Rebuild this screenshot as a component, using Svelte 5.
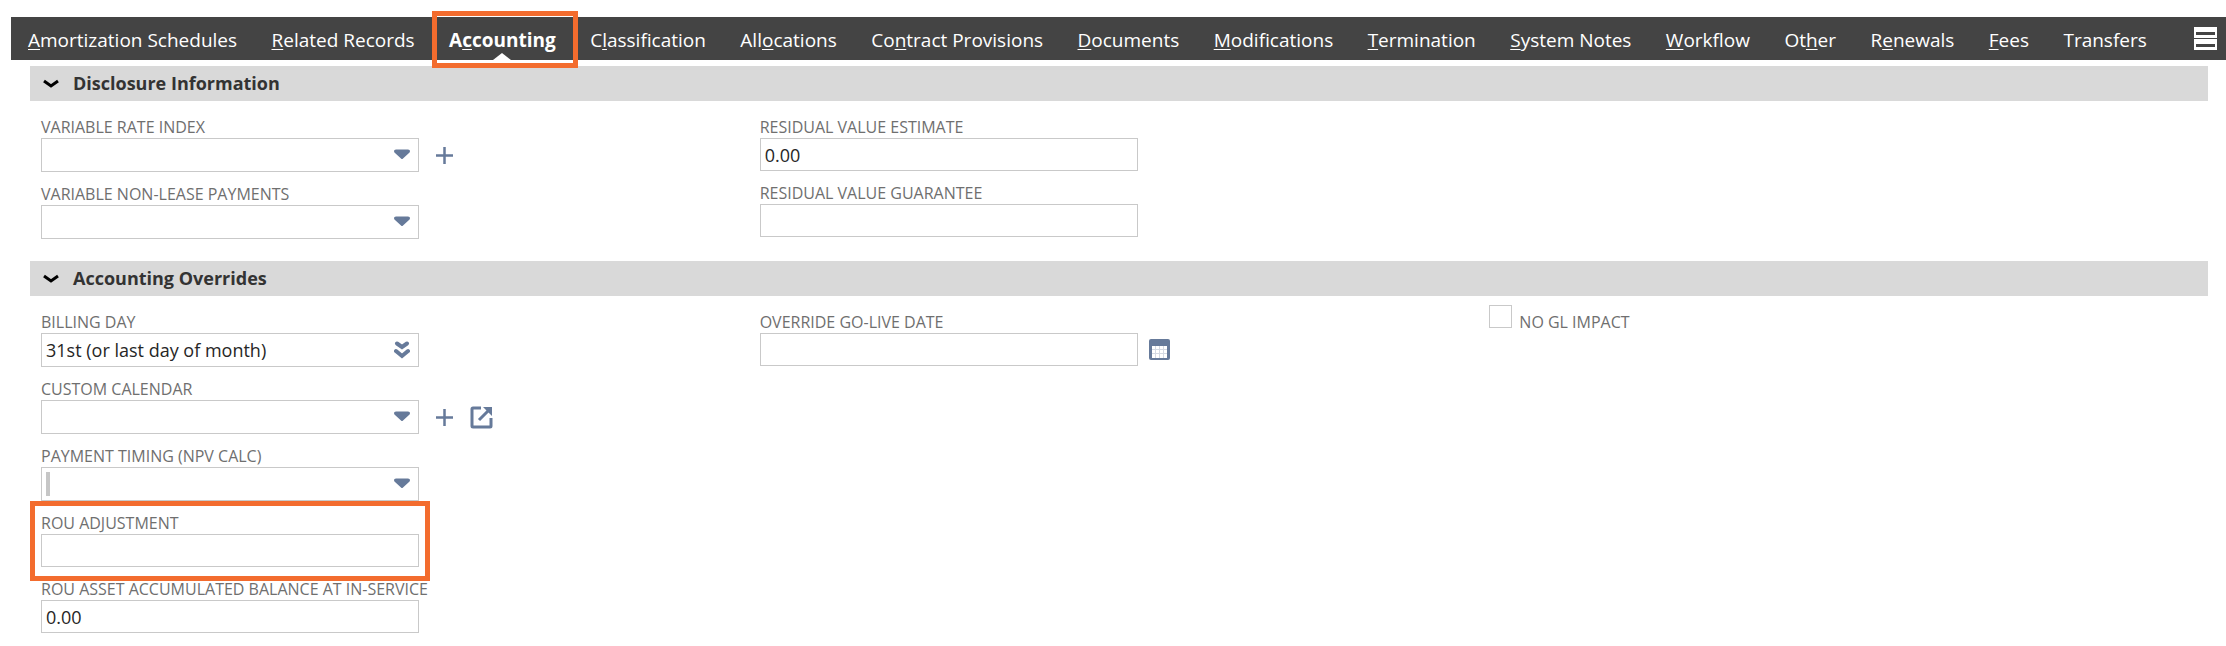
<script>
	const tabs = [
		{ text: 'Amortization Schedules', key: 0 },
		{ text: 'Related Records', key: 0 },
		{ text: 'Accounting', key: 1 },
		{ text: 'Classification', key: 1 },
		{ text: 'Allocations', key: 3 },
		{ text: 'Contract Provisions', key: 2 },
		{ text: 'Documents', key: 0 },
		{ text: 'Modifications', key: 0 },
		{ text: 'Termination', key: 0 },
		{ text: 'System Notes', key: 0 },
		{ text: 'Workflow', key: 0 },
		{ text: 'Other', key: 2 },
		{ text: 'Renewals', key: 1 },
		{ text: 'Fees', key: 0 },
		{ text: 'Transfers', key: -1 }
	];

	let active = $state('Accounting');
	let open = $state({ disclosure: true, overrides: true });

	const disclosureLeft = [
		{ id: 'rate-index', label: 'Variable Rate Index', type: 'select', options: [''], add: true },
		{ id: 'non-lease', label: 'Variable Non-Lease Payments', type: 'select', options: [''] }
	];
	const disclosureRight = [
		{ id: 'residual-estimate', label: 'Residual Value Estimate', type: 'text', value: '0.00' },
		{ id: 'residual-guarantee', label: 'Residual Value Guarantee', type: 'text', value: '' }
	];
	const overridesLeft = [
		{ id: 'billing-day', label: 'Billing Day', type: 'select', options: ['31st (or last day of month)'], double: true },
		{ id: 'calendar', label: 'Custom Calendar', type: 'select', options: [''], add: true, link: true },
		{ id: 'timing', label: 'Payment Timing (NPV Calc)', type: 'select', options: [''], marker: true },
		{ id: 'rou-adjustment', label: 'ROU Adjustment', type: 'text', value: '', highlight: true },
		{ id: 'rou-balance', label: 'ROU Asset Accumulated Balance at In-Service', type: 'text', value: '0.00' }
	];
	const overridesRight = [
		{ id: 'go-live', label: 'Override Go-Live Date', type: 'text', value: '', date: true }
	];
</script>

{#snippet header(name, title)}
	<h2 class="section-title">
		<button type="button" aria-expanded={open[name]} onclick={() => (open[name] = !open[name])}>
			<svg class="chevron" viewBox="0 0 16 10" aria-hidden="true">
				<path d="M1 2l7 5 7-5" />
			</svg>
			{title}
		</button>
	</h2>
{/snippet}

{#snippet field(f)}
	<div class="field" class:highlight={f.highlight}>
		<label for={f.id}>{f.label}</label>
		<div class="control">
			{#if f.type === 'select'}
				<div class="select">
					<select id={f.id}>
						{#each f.options as option}
							<option>{option}</option>
						{/each}
					</select>
					{#if f.marker}
						<span class="marker"></span>
					{/if}
					<svg class="arrow" viewBox="0 0 16 18" aria-hidden="true">
						{#if f.double}
							<path class="line" d="M3 2.5l5 3.5 5-3.5M2 10l6 5 6-5" />
						{:else}
							<path class="fill" d="M2 3.5h12q2 0 2 1.500t-1 2l-6 5.500q-1 1-2 0l-6-5.500q-1-.5-1-2t2-1.500z" />
						{/if}
					</svg>
				</div>
			{:else}
				<input id={f.id} type="text" value={f.value} />
			{/if}
			{#if f.add}
				<button type="button" class="icon plus" aria-label="New">
					<svg viewBox="0 0 17 17"><path d="M8.5 0v17M0 8.5h17" /></svg>
				</button>
			{/if}
			{#if f.link}
				<button type="button" class="icon open" aria-label="Open">
					<svg viewBox="0 0 23 23">
						<path d="M11 2H3q-1 0-1 1v17q0 1 1 1h17q1 0 1-1v-8M9 14l9-9" />
						<path class="head" d="M13 1h9v9z" />
					</svg>
				</button>
			{/if}
			{#if f.date}
				<button type="button" class="icon date" aria-label="Pick">
					<svg viewBox="0 0 21 21">
						<rect class="frame" width="21" height="21" rx="2" />
						<rect class="page" x="3" y="7" width="15" height="12" />
						<path class="grid" d="M6.5 7v12M10.5 7v12M14.5 7v12M3 10.5h15M3 14.5h15" />
					</svg>
				</button>
			{/if}
		</div>
	</div>
{/snippet}

<div class="record">
	<nav class="tabs">
		<div class="tab-list">
			{#each tabs as { text, key }}
				<a
					href="#{text.toLowerCase().replace(' ', '-')}"
					class:active={active === text}
					onclick={() => (active = text)}
				>{#if key < 0}{text}{:else}{text.slice(0, key)}<u>{text[key]}</u>{text.slice(key + 1)}{/if}</a>
			{/each}
		</div>
		<button type="button" class="layout" aria-label="Layout">
			<svg viewBox="0 0 23 23">
				<path d="M0 0h23v11H0zM2 5v3h19V5z" fill-rule="evenodd" />
				<path d="M0 12h23v11H0zM2 17v3h19v-3z" fill-rule="evenodd" />
			</svg>
		</button>
	</nav>

	<main>
		<section>
			{@render header('disclosure', 'Disclosure Information')}
			{#if open.disclosure}
				<div class="columns">
					<div class="column">{#each disclosureLeft as f}{@render field(f)}{/each}</div>
					<div class="column">{#each disclosureRight as f}{@render field(f)}{/each}</div>
				</div>
			{/if}
		</section>

		<section>
			{@render header('overrides', 'Accounting Overrides')}
			{#if open.overrides}
				<div class="columns">
					<div class="column">{#each overridesLeft as f}{@render field(f)}{/each}</div>
					<div class="column">{#each overridesRight as f}{@render field(f)}{/each}</div>
					<div class="column">
						<div class="check">
							<input id="no-gl" type="checkbox" />
							<label for="no-gl">No GL Impact</label>
						</div>
					</div>
				</div>
			{/if}
		</section>
	</main>
</div>

<style>
	:global(body) {
		background: #fff;
	}

	.record {
		--accent: #f36c2e;
		--icon: #667a9a;
		--border: #c9c9c9;
		padding: 17px 0 0 11px;
		font-family: 'Open Sans', 'Noto Sans', sans-serif;
		font-size: 18px;
		color: #262626;
	}

	.tabs {
		display: flex;
		align-items: center;
		justify-content: space-between;
		height: 43px;
		padding: 0 9px 0 17px;
		background: #444;
	}

	.tab-list {
		flex: 1;
		display: flex;
		justify-content: space-between;
		margin-right: 47px;
	}

	.tabs a {
		position: relative;
		padding-top: 3px;
		font-size: 19px;
		line-height: 40px;
		color: #fff;
		text-decoration: none;
		white-space: nowrap;
	}

	.tabs u {
		text-underline-offset: 2px;
		text-decoration-thickness: 1px;
		text-decoration-skip-ink: none;
	}

	.tabs a.active {
		font-weight: 700;
	}

	.tabs a.active::before {
		content: '';
		position: absolute;
		bottom: 0;
		left: 50%;
		margin-left: -9px;
		border: 9px solid transparent;
		border-top: 0;
		border-bottom: 7px solid #fff;
	}

	.tabs a.active::after {
		content: '';
		position: absolute;
		inset: -6px -22px -8px -17px;
		border: 5px solid var(--accent);
	}

	button {
		padding: 0;
		border: 0;
		background: none;
		font: inherit;
		color: inherit;
		cursor: pointer;
	}

	svg {
		display: block;
	}

	.layout svg {
		width: 23px;
		height: 23px;
		fill: #fff;
	}

	main {
		padding: 6px 18px 0 19px;
	}

	.section-title {
		margin: 0;
		background: #d9d9d9;
		font-size: 18px;
		font-weight: 700;
		line-height: 35px;
		color: #333;
	}

	.section-title button {
		display: flex;
		align-items: center;
		gap: 14px;
		width: 100%;
		padding-left: 13px;
	}

	.chevron {
		width: 16px;
		height: 10px;
		fill: none;
		stroke: #000;
		stroke-width: 3;
	}

	.columns {
		display: grid;
		grid-template-columns: repeat(3, 1fr);
		padding: 15px 11px 22px;
	}

	.column {
		display: flex;
		flex-direction: column;
		gap: 11px;
	}

	.field {
		position: relative;
	}

	label {
		font-size: 16px;
		line-height: 22px;
		color: #6f6f6f;
		text-transform: uppercase;
		white-space: nowrap;
	}

	.field label {
		display: block;
	}

	.highlight::after {
		content: '';
		position: absolute;
		top: -11px;
		left: -11px;
		width: 390px;
		height: 70px;
		border: 5px solid var(--accent);
		pointer-events: none;
	}

	.control {
		display: flex;
		align-items: center;
	}

	.select {
		position: relative;
	}

	select,
	input[type='text'] {
		display: block;
		box-sizing: border-box;
		width: 378px;
		height: 34px;
		margin: 0;
		padding: 0 4px;
		border: 1px solid var(--border);
		border-radius: 0;
		background: #fff;
		font: inherit;
		color: inherit;
		appearance: none;
	}

	input[type='text'] {
		height: 33px;
	}

	.arrow {
		position: absolute;
		top: 8px;
		right: 9px;
		width: 16px;
		height: 18px;
		pointer-events: none;
	}

	.fill {
		fill: var(--icon);
	}

	.line {
		fill: none;
		stroke: var(--icon);
		stroke-width: 4;
		stroke-linecap: round;
	}

	.marker {
		position: absolute;
		top: 5px;
		left: 5px;
		width: 4px;
		height: 24px;
		background: #c6c6c6;
	}

	.icon svg {
		fill: none;
		stroke: var(--icon);
		stroke-width: 3;
	}

	.plus {
		margin-left: 17px;
	}

	.plus svg {
		width: 17px;
		height: 17px;
		stroke-width: 2.5;
	}

	.open {
		margin-left: 17px;
	}

	.open svg {
		width: 23px;
		height: 23px;
	}

	.open .head {
		fill: var(--icon);
		stroke: none;
	}

	.date {
		margin-left: 11px;
	}

	.date svg {
		width: 21px;
		height: 21px;
	}

	.date .frame {
		fill: var(--icon);
		stroke: none;
	}

	.date .page {
		fill: #fff;
		stroke: none;
	}

	.date .grid {
		stroke: #d5dae3;
		stroke-width: 1;
	}

	.check {
		display: flex;
		align-items: flex-start;
		gap: 7px;
		padding-left: 11px;
	}

	.check input {
		width: 23px;
		height: 23px;
		margin: -6px 0 0;
		border: 1px solid var(--border);
		background: #fff;
		appearance: none;
	}
</style>
